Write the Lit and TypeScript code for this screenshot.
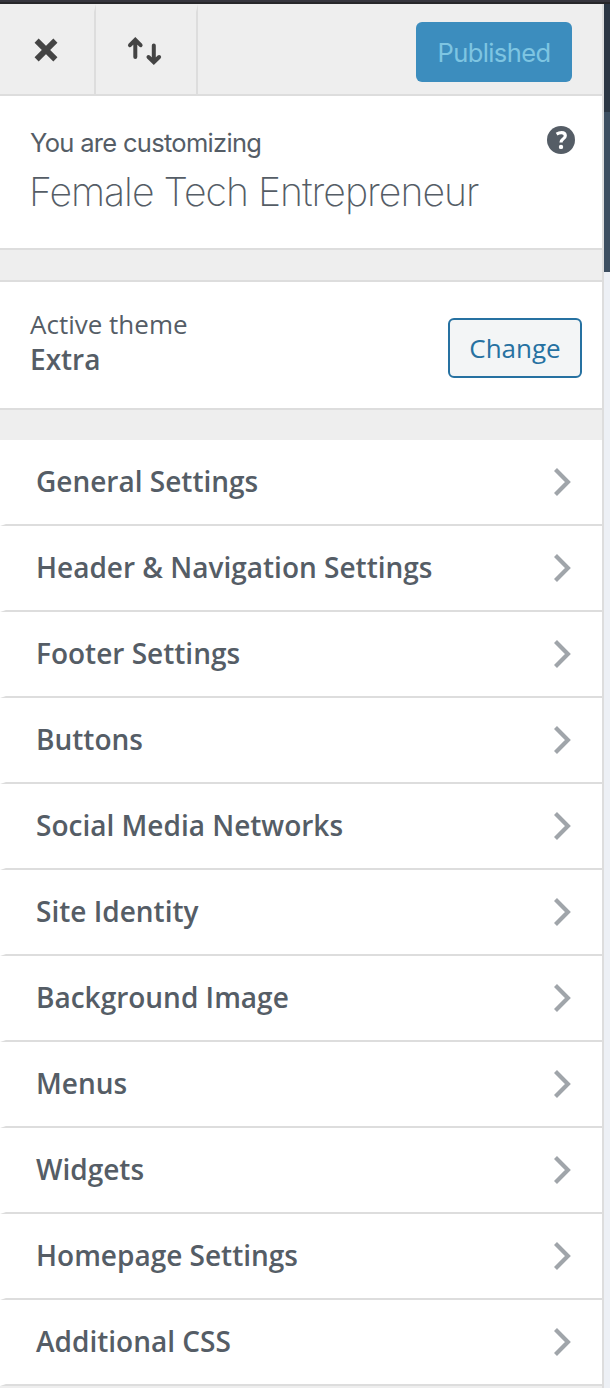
import { LitElement, html, css } from "lit";
import { customElement, property } from "lit/decorators.js";

@customElement("panel-row")
class PanelRow extends LitElement {
  @property() label = "";

  static styles = css`
    :host {
      display: block;
    }
    .row {
      box-sizing: border-box;
      height: 86px;
      display: flex;
      align-items: center;
      justify-content: space-between;
      padding: 0 30px;
      background: #fff;
      border-left: 6px solid #fff;
      border-bottom: 2px solid #ddd;
    }
    .title {
      margin: 0;
      padding-bottom: 2px;
      font: 600 28px/40px "Open Sans", sans-serif;
      color: #555d66;
      white-space: nowrap;
    }
    .chevron {
      width: 20px;
      height: 30px;
      display: block;
    }
  `;

  render() {
    return html`<div class="row">
      <h3 class="title">${this.label}</h3>
      <svg class="chevron" viewBox="0 0 20 30">
        <path d="M3.5 2.5 15.9 15 3.5 27.5" fill="none" stroke="#a0a5aa" stroke-width="4.2" />
      </svg>
    </div>`;
  }
}

@customElement("app-root")
class AppRoot extends LitElement {
  private sections = [
    "General Settings",
    "Header & Navigation Settings",
    "Footer Settings",
    "Buttons",
    "Social Media Networks",
    "Site Identity",
    "Background Image",
    "Menus",
    "Widgets",
    "Homepage Settings",
    "Additional CSS",
  ];

  static styles = css`
    :host {
      display: block;
      width: 610px;
      height: 1388px;
      overflow: hidden;
      color: #555d66;
      font-family: "Open Sans", sans-serif;
    }
    * {
      box-sizing: border-box;
    }
    .chrome {
      height: 4px;
      background: #36353d;
      border-bottom: 2px solid #27272a;
    }
    .body {
      display: flex;
      height: 1384px;
    }
    .panel {
      width: 604px;
      border-right: 2px solid #ddd;
      background: #eee;
    }
    .preview {
      width: 6px;
      background: #edf0f5;
    }
    .preview-top {
      height: 108px;
      background: #2c3744;
    }
    .preview-hero {
      height: 160px;
      background: #3d4f61;
    }
    .bar {
      height: 92px;
      display: flex;
      border-bottom: 2px solid #ddd;
    }
    .tool {
      height: 90px;
      padding: 0;
      margin: 0;
      background: #eee;
      border: 0 solid #ddd;
      border-right-width: 2px;
      border-top: 8px solid #eee;
      display: block;
    }
    .close {
      width: 96px;
    }
    .swap {
      width: 102px;
    }
    .tool svg {
      display: block;
      width: 100%;
      height: 82px;
    }
    .publish {
      margin: 18px 30px 0 auto;
      width: 156px;
      height: 60px;
      border: 0;
      padding: 2px 0 0;
      border-radius: 6px;
      background: #3c8dbe;
      color: #7ec5e2;
      font: 400 25.5px/58px Inter, sans-serif;
      letter-spacing: -0.6px;
      text-align: center;
    }
    .info {
      height: 154px;
      display: flex;
      justify-content: space-between;
      padding: 29px 27px 0 30px;
      background: #fff;
      border-bottom: 2px solid #ddd;
    }
    .notice {
      font: 400 25.5px/36px Inter, sans-serif;
      letter-spacing: -0.69px;
      white-space: nowrap;
    }
    .site {
      font: 200 39.2px/48px Inter, sans-serif;
      letter-spacing: -1px;
      margin: 7px 0 0 -1px;
      white-space: nowrap;
    }
    .help {
      display: block;
      width: 28px;
      height: 28px;
      margin-top: 1px;
    }
    .theme {
      height: 130px;
      margin: 30px 0;
      display: flex;
      justify-content: space-between;
      padding: 25px 20px 0 30px;
      background: #fff;
      border-top: 2px solid #ddd;
      border-bottom: 2px solid #ddd;
    }
    .theme-label {
      font-size: 26px;
      line-height: 35px;
    }
    .theme-name {
      font-size: 28px;
      line-height: 35px;
      font-weight: 600;
    }
    .change {
      width: 134px;
      height: 60px;
      margin-top: 11px;
      padding: 0;
      border: 2px solid #2671a1;
      border-radius: 6px;
      background: #f3f5f6;
      color: #2671a1;
      font: 400 26px/56px "Open Sans", sans-serif;
    }
  `;

  render() {
    return html`
      <div class="chrome"></div>
      <div class="body">
        <div class="panel">
          <div class="bar">
            <button class="tool close" aria-label="Close">
              <svg viewBox="0 0 94 82">
                <path d="M36.6 28.6 55.4 47.4M55.4 28.6 36.6 47.4" stroke="#444" stroke-width="5.8" />
              </svg>
            </button>
            <button class="tool swap" aria-label="Reorder">
              <svg viewBox="0 0 100 82" fill="none" stroke="#444" stroke-width="4" stroke-linecap="round">
                <path d="M39.3 45V29M34 33.2 39.3 27.8 44.6 33.2" />
                <path d="M57.8 33.5V49M52.5 45 57.8 50.2 63.1 45" />
              </svg>
            </button>
            <button class="publish">Published</button>
          </div>
          <div class="info">
            <div>
              <div class="notice">You are customizing</div>
              <div class="site">Female Tech Entrepreneur</div>
            </div>
            <svg class="help" viewBox="0 0 28 28">
              <circle cx="14" cy="14" r="14" fill="#555d66" />
              <path d="M9.6 8.2C11.4 7.1 13 6.7 14.5 6.7c2.4 0 3.8 1.2 3.8 3.1 0 1.5-.9 2.4-2.2 3.2-1.4 1-2.1 1.7-2.1 3.6" fill="none" stroke="#fff" stroke-width="3.2" />
              <circle cx="14" cy="20.9" r="2.2" fill="#fff" />
            </svg>
          </div>
          <div class="theme">
            <div>
              <div class="theme-label">Active theme</div>
              <div class="theme-name">Extra</div>
            </div>
            <button class="change">Change</button>
          </div>
          ${this.sections.map((s) => html`<panel-row .label=${s}></panel-row>`)}
        </div>
        <div class="preview">
          <div class="preview-top"></div>
          <div class="preview-hero"></div>
        </div>
      </div>
    `;
  }
}
